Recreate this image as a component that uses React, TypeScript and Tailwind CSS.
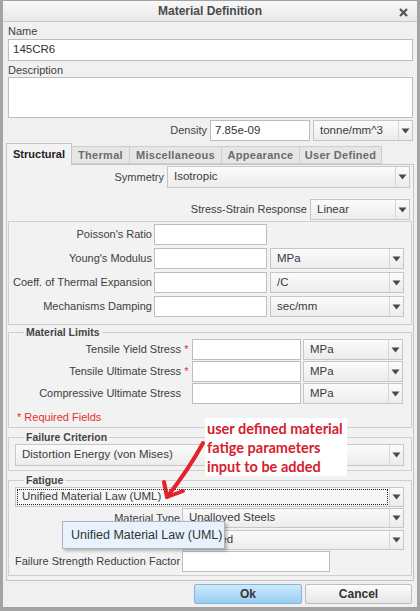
import React from "react";

function Arrow() {
  return (
    <svg width="9" height="6" viewBox="0 0 9 6">
      <path d="M0.5 0.5 L8.5 0.5 L4.5 5.5 Z" fill="#4a4a4a" />
    </svg>
  );
}

interface ISelectProps {
  value?: string;
  className?: string;
  focused?: boolean;
}

function Select({ value, className, focused }: ISelectProps) {
  return (
    <div className={"flex border border-[#c6c6c6] bg-linear-to-b from-[#fbfbfb] to-[#ececec] " + (className || "")}>
      <div className="flex-1 flex p-[1px]">
        <div
          className={
            "flex-1 flex items-center pl-[4px] text-[11.5px] text-[#3a3a3a] whitespace-nowrap overflow-hidden " +
            (focused ? "border border-dotted border-[#222] bg-[#f7f7f7]" : "border border-transparent")
          }
        >
          {value}
        </div>
      </div>
      <div className="w-[14px] border-l border-[#d6d6d6] flex items-center justify-center">
        <Arrow />
      </div>
    </div>
  );
}

function Input({ className, value }: { className?: string; value?: string }) {
  return (
    <div className={"border border-[#bdbdbd] bg-white flex items-center pl-[4px] text-[11.5px] text-[#333] " + (className || "")}>
      {value}
    </div>
  );
}

function Legend({ children }: { children: React.ReactNode }) {
  return (
    <legend className="ml-[15px] px-[2px] h-[12px] leading-[12px] text-[10.5px] font-bold text-[#444]">{children}</legend>
  );
}

const tabs = [
  { name: "Thermal", w: "w-[58px]" },
  { name: "Miscellaneous", w: "w-[92px]" },
  { name: "Appearance", w: "w-[78px]" },
  { name: "User Defined", w: "w-[82px]" },
];

export default function App() {
  return (
    <div className="w-[420px] h-[611px] bg-[#a3a3a3] pl-[3px] pr-[3px] pt-[1px] pb-[4px] font-['Liberation_Sans',Arial,sans-serif] text-[#404040]">
      <div className="relative h-full bg-[#f0f0f0] flex flex-col">
        {/* title bar */}
        <div className="relative h-[21px] shrink-0 border-b border-[#cacaca] bg-linear-to-b from-[#f8f8f8] to-[#e9e9e9] flex items-center justify-center">
          <span className="text-[12px] font-bold text-[#4a4a4a]">Material Definition</span>
          <svg className="absolute right-[9px] top-[7px]" width="9" height="9" viewBox="0 0 9 9">
            <path d="M1 1 L8 8 M8 1 L1 8" stroke="#555" strokeWidth="2.2" />
          </svg>
        </div>

        <div className="flex flex-col pl-[5px] pr-[4px]">
          <div className="h-[17px] pt-[2px] leading-[15px] text-[11px]">Name</div>
          <Input className="h-[22px]" value="145CR6" />
          <div className="h-[16px] leading-[18px] text-[11px]">Description</div>
          <div className="h-[41px] border border-[#bdbdbd] bg-white" />

          <div className="mt-[2px] h-[21px] flex justify-end items-center">
            <span className="text-[11px] mr-[3px]">Density</span>
            <Input className="w-[100px] h-[21px]" value="7.85e-09" />
            <Select className="ml-[3px] w-[100px] h-[21px]" value="tonne/mm^3" />
          </div>

          {/* tabs */}
          <div className="mt-[2px] -ml-[2px] -mr-[1px] flex flex-col">
            <div className="h-[21px] flex items-end">
              <div className="relative z-10 -mb-px w-[66px] h-[22px] border border-b-0 border-[#c4c4c4] bg-[#f3f3f3] flex items-center justify-center text-[11px] font-bold text-[#222]">
                Structural
              </div>
              {tabs.map((t) => (
                <div
                  key={t.name}
                  className={t.w + " h-[18px] border border-l-0 border-[#cdcdcd] bg-[#e6e6e6] flex items-center justify-center text-[11px] font-bold text-[#6c6c6c] tracking-[0.3px]"}
                >
                  {t.name}
                </div>
              ))}
            </div>

            {/* panel */}
            <div className="h-[417px] border border-[#c4c4c4] bg-[#f2f2f2] flex flex-col">
              <div className="mt-[1px] h-[22px] pr-[3px] flex justify-end items-center">
                <span className="text-[11px] mr-[3px]">Symmetry</span>
                <Select className="w-[243px] h-[22px]" value="Isotropic" />
              </div>
              <div className="mt-[11px] h-[21px] pr-[3px] flex justify-end items-center">
                <span className="text-[11px] mr-[3px]">Stress-Strain Response</span>
                <Select className="w-[100px] h-[21px]" value="Linear" />
              </div>

              {/* properties */}
              <div className="mt-[1px] mx-[1px] border border-[#cfcfcf] pt-[2px] pb-[7px] flex flex-col gap-[3px]">
                {[
                  { label: "Poisson's Ratio", unit: "" },
                  { label: "Young's Modulus", unit: "MPa" },
                  { label: "Coeff. of Thermal Expansion", unit: "/C" },
                  { label: "Mechanisms Damping", unit: "sec/mm" },
                ].map((r) => (
                  <div key={r.label} className="h-[21px] flex items-center">
                    <span className="w-[143px] mr-[2px] text-right text-[11px] whitespace-nowrap">{r.label}</span>
                    <Input className="w-[113px] h-[21px]" />
                    {r.unit && <Select className="ml-[3px] w-[134px] h-[21px]" value={r.unit} />}
                  </div>
                ))}
              </div>

              {/* material limits */}
              <fieldset className="mt-[1px] mx-[1px] border border-[#cfcfcf] pb-[3px]">
                <Legend>Material Limits</Legend>
                <div className="mt-[1px] flex flex-col gap-[1px]">
                  {[
                    { label: "Tensile Yield Stress", req: true },
                    { label: "Tensile Ultimate Stress", req: true },
                    { label: "Compressive Ultimate Stress", req: false },
                  ].map((r) => (
                    <div key={r.label} className="h-[21px] flex items-center">
                      <span className="w-[172px] text-right text-[11px] whitespace-nowrap">{r.label}</span>
                      <span className="w-[11px] text-center text-[11px] text-[#e03030]">{r.req ? "*" : ""}</span>
                      <Input className="w-[109px] h-[21px]" />
                      <Select className="ml-[2px] w-[100px] h-[21px]" value="MPa" />
                    </div>
                  ))}
                </div>
                <div className="mt-[6px] h-[14px] leading-[14px] pl-[8px] text-[11px] text-[#e03030]">* Required Fields</div>
              </fieldset>

              {/* failure criterion */}
              <fieldset className="mt-[3px] mx-[1px] border border-[#cfcfcf] pb-[4px]">
                <Legend>Failure Criterion</Legend>
                <div className="pl-[6px]">
                  <Select className="mt-[1px] w-[389px] h-[22px]" value="Distortion Energy (von Mises)" />
                </div>
              </fieldset>

              {/* fatigue */}
              <fieldset className="mt-[3px] mx-[1px] border border-[#cfcfcf] pb-[3px]">
                <Legend>Fatigue</Legend>
                <div className="pl-[6px] flex flex-col">
                  <Select className="mt-[1px] w-[389px] h-[20px]" value="Unified Material Law (UML)" focused />
                  <div className="mt-[1px] h-[20px] flex items-center">
                    <span className="w-[165px] mr-[2px] text-right text-[11px]">Material Type</span>
                    <Select className="w-[222px] h-[20px]" value="Unalloyed Steels" />
                  </div>
                  <div className="mt-[2px] h-[20px] flex items-center">
                    <span className="w-[165px] mr-[2px]" />
                    <Select className="w-[222px] h-[20px]" value="Polished" />
                  </div>
                  <div className="mt-[1px] h-[21px] flex items-center">
                    <span className="w-[165px] mr-[2px] text-right text-[11px] whitespace-nowrap">Failure Strength Reduction Factor</span>
                    <Input className="w-[148px] h-[21px]" />
                  </div>
                </div>
              </fieldset>
            </div>
          </div>

          {/* buttons */}
          <div className="mt-[3px] pr-[1px] flex justify-end gap-[3px]">
            <button className="w-[108px] h-[20px] rounded-[2px] border border-[#86b6d8] bg-linear-to-b from-[#cdeafc] to-[#98cdf2] text-[12px] font-bold text-[#333]">
              Ok
            </button>
            <button className="w-[107px] h-[20px] rounded-[2px] border border-[#bdbdbd] bg-linear-to-b from-[#fbfbfb] to-[#e6e6e6] text-[12px] font-bold text-[#333]">
              Cancel
            </button>
          </div>
        </div>

        {/* tooltip */}
        <div className="absolute left-[59px] top-[520px] w-[163px] h-[28px] border border-[#a9b5c2] bg-[#e8f2fc] shadow-[2px_2px_3px_rgba(0,0,0,0.25)] flex items-center pl-[8px] text-[12.5px] text-[#333] whitespace-nowrap">
          Unified Material Law (UML)
        </div>

        {/* annotation */}
        <div className="absolute left-[202px] top-[417px] w-[142px] h-[58px] bg-white pl-[2px] pt-[1px] font-['Lato',sans-serif] font-bold text-[14.5px] leading-[19px] text-[#d4202c]">
          <div>user defined material</div>
          <div>fatige parameters</div>
          <div>input to be added</div>
        </div>
        <svg className="absolute left-0 top-0 pointer-events-none" width="414" height="606">
          <path d="M200 442 Q186 468 164 496" stroke="#e3222b" strokeWidth="4" fill="none" strokeLinecap="round" />
          <path d="M161 481 L164 496 L180 490" stroke="#e3222b" strokeWidth="4" fill="none" strokeLinecap="round" strokeLinejoin="round" />
        </svg>
      </div>
    </div>
  );
}
